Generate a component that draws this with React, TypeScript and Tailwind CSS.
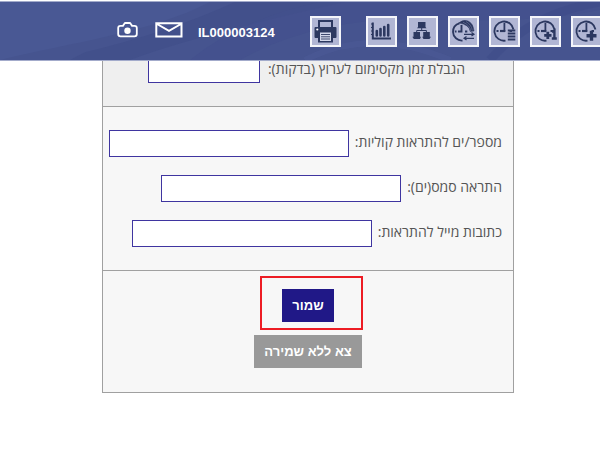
import React from 'react'

const ToolButton = ({ label, children }: { label: string; children: React.ReactNode }) => {
    return (
        <button type="button" aria-label={label} className="h-[31px] w-[31px] shrink-0 border-2 border-[#f4f5fa] bg-[#b1b6d4] text-[#2c3860]">
            <svg viewBox="0 0 27 27" className="block h-full w-full" fill="none" stroke="currentColor">
                {children}
            </svg>
        </button>
    )
}

// Clock face with its lower right corner left free for a badge
const Clock = () => {
    return (
        <>
            <path d="M14.5 22.6A9.6 9.6 0 1 1 22.5 11.5" strokeWidth="1.8" />
            <path d="M13.4 5v8.5M5.5 13h2M18.5 13h2.5" strokeWidth="1.8" />
            <path d="M9 13h5.3" strokeWidth="2.2" />
        </>
    )
}

const Header = () => {
    return (
        <header className="relative z-10 mt-px h-[60px] overflow-hidden border-y border-[#a3abcb] bg-[#46548f]">
            <svg viewBox="0 0 600 60" preserveAspectRatio="none" className="absolute inset-0 h-full w-full" fill="none">
                <path d="M0 0H210C150 32 70 42 0 60Z" fill="#495894" />
                <path d="M85 52Q170 31 235 0H345Q190 36 130 60H70Z" fill="#3e4b87" opacity=".5" />
                <path d="M240 60Q320 14 430 18T600 8V0H320Q240 18 190 60Z" fill="#43508d" opacity=".7" />
                <path d="M305 60Q370 25 450 60" stroke="#5260a0" strokeWidth="6" opacity=".3" />
                <path d="M490 60Q530 12 600 0" stroke="#394783" strokeWidth="9" opacity=".3" />
            </svg>
            <div className="relative flex items-start pl-[117px] pt-[14px]">
                <button type="button" aria-label="Camera" className="mt-1.5 h-4 w-[21px] shrink-0 text-white">
                    <svg viewBox="0 0 21 16" className="block" fill="none" stroke="currentColor" strokeWidth="1.8">
                        <path d="M3.5 3.8H6l1.3-2.1Q7.7 1 8.5 1h4q.8 0 1.2.7L15 3.8h2.5q2.3 0 2.3 2.3v6q0 2.3-2.3 2.3h-14q-2.3 0-2.3-2.3v-6q0-2.3 2.3-2.3Z" />
                        <circle cx="10.5" cy="8.7" r="3.2" fill="currentColor" stroke="none" />
                    </svg>
                </button>
                <button type="button" aria-label="Mail" className="ml-[17px] mt-1.5 h-4 w-7 shrink-0 text-white">
                    <svg viewBox="0 0 28 16" className="block" fill="none" stroke="currentColor" strokeWidth="2">
                        <path d="M1.3 1.2h25.2v13.2H1.3ZM2 2l12 6.8L26 2" />
                    </svg>
                </button>
                <span className="ml-[15px] mt-[9px] w-28 shrink-0 text-[13px] font-bold leading-4 text-white">IL000003124</span>
                <div className="flex gap-[10px]">
                    <div className="mr-[15px]">
                        <ToolButton label="Print">
                            <g fill="currentColor" stroke="none">
                                <path d="M6 2h15v7h-2V4H8v5H6Z" />
                                <path d="M3.5 9h20q1 0 1 1v9q0 1-1 1H21v4.5H6V20H3.5q-1 0-1-1v-9q0-1 1-1Z" />
                            </g>
                            <path d="M8 14.5h11V23H8Z" fill="#d3d7ea" stroke="none" />
                            <path d="M9 16.5h9M9 18.8h9M9 21h9" strokeWidth=".9" />
                            <circle cx="5.3" cy="11.5" r="1.1" fill="#fff" stroke="none" />
                        </ToolButton>
                    </div>
                    <ToolButton label="Statistics">
                        <path d="M4.8 4.5V20.5H23" strokeWidth="2" />
                        <path d="M3 6h2M3 9.5h2M3 13h2M3 16.5h2" strokeWidth="1" />
                        <path d="M8.8 13v4.5M12.5 11v6.5M16.3 9v8.5M20.2 7v10.5" strokeWidth="2.6" strokeLinecap="round" />
                    </ToolButton>
                    <ToolButton label="Network">
                        <path d="M12.7 10v2.5M7.7 15v-2.5h9.7V15" strokeWidth="1" />
                        <path d="M9 4h7.5v5l1 1.3H8L9 9ZM4.5 14H11v4.8h1L11 21H4.8l-1.5-2.2h1.2ZM14.2 14h6.6v4.8H22L20.5 21h-6l-1.3-2.2h1Z" fill="currentColor" stroke="none" />
                    </ToolButton>
                    <ToolButton label="Reschedule">
                        <path d="M12.5 22.5A8.8 8.8 0 0 1 3 14Q3 7 9.5 5.3" strokeWidth="1.8" />
                        <path d="M8.5 5Q13 1 18 3T24 13l-3.8.5Q19.5 6.5 8.5 5Z" fill="currentColor" strokeWidth=".5" />
                        <path d="M13 4.3Q20 7 20.6 13M16 3.5Q21.5 6.5 22.3 12.5" stroke="#737c9f" strokeWidth=".6" />
                        <path d="M11.5 7v6.5H8M4.8 13.5h1.7M15 13.5h2.3" strokeWidth="1.9" />
                        <path d="M14 16.3h10m-2.5-1.8 2.5 1.8-2.5 1.8M24 20.3H14m2.5-1.8L14 20.3l2.5 1.8" strokeWidth="1.2" />
                    </ToolButton>
                    <ToolButton label="Schedule list">
                        <Clock />
                        <path d="M16.8 12.5h7.5M16.8 15.5h7.5M16.8 18.5h7.5M16.8 21.5h7.5" strokeWidth="2" />
                    </ToolButton>
                    <ToolButton label="Add one">
                        <Clock />
                        <path d="M12.2 17.3h7.3M15.8 13.7V21" strokeWidth="2.8" />
                        <path d="M19.8 14l2.6-1.6V21M19.8 20.5h5" strokeWidth="2.4" />
                    </ToolButton>
                    <ToolButton label="Add schedule">
                        <Clock />
                        <path d="M13.5 17.8h10M18.5 12.8v10" strokeWidth="3.4" />
                    </ToolButton>
                </div>
            </div>
        </header>
    )
}

const Field = ({ id, label }: { id: string; label: string }) => {
    return (
        <div className="flex items-start gap-1.5">
            <label htmlFor={id} className="shrink-0 whitespace-nowrap leading-6">{label}</label>
            <input id={id} type="text" className="h-[27px] w-60 min-w-0 border border-[#3f35a0] bg-white px-2" />
        </div>
    )
}

const App = () => {
    return (
        <div className="min-h-screen overflow-hidden bg-white font-['Liberation_Sans',sans-serif]">
            <Header />
            <form dir="rtl" className="-mt-1 ml-[102px] mr-[86px] border border-t-0 border-[#a0a0a0] bg-[#f7f7f7] font-['Open_Sans',sans-serif] text-[14px] text-[#555]">
                <section className="flex h-[50px] items-start gap-2 border-b border-[#a0a0a0] bg-[#efefef] pr-12">
                    <label htmlFor="limit" className="shrink-0 whitespace-nowrap leading-6">הגבלת זמן מקסימום לערוץ (בדקות):</label>
                    <input id="limit" type="text" className="h-[26px] w-28 border border-[#3f35a0] bg-white px-2" />
                </section>
                <section className="flex flex-col gap-[18px] border-b border-[#a0a0a0] pb-[23px] pr-[11px] pt-[23px]">
                    <Field id="voice" label="מספר/ים להתראות קוליות:" />
                    <Field id="sms" label="התראה סמס(ים):" />
                    <Field id="mail" label="כתובות מייל להתראות:" />
                </section>
                <section className="flex flex-col items-center gap-[13px] pb-6 pt-[18px] font-['Liberation_Sans',sans-serif] text-[13px] font-bold text-white">
                    <div className="relative">
                        <button type="submit" className="block h-[33px] w-[52px] bg-[#201887]">שמור</button>
                        <div className="pointer-events-none absolute -bottom-2 -left-[22px] -right-[29px] -top-[13px] border-2 border-[#ed1c24]" />
                    </div>
                    <button type="button" className="h-[33px] w-[108px] bg-[#999]">צא ללא שמירה</button>
                </section>
            </form>
        </div>
    )
}
export default App
